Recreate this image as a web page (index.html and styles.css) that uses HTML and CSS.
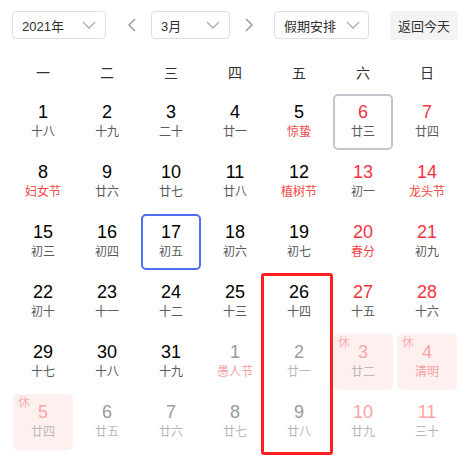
FILE: index.html
```html
<!DOCTYPE html>
<html lang="zh">
<head>
<meta charset="utf-8">
<link rel="stylesheet" href="styles.css">
</head>
<body>
<div class="page">
  <div class="toolbar">
    <div class="select sel-year"><span>2021年</span><svg class="chev" width="14" height="8" viewBox="0 0 14 8"><polyline points="1,1 7,7 13,1" fill="none" stroke="#a8abb2" stroke-width="1.3"/></svg></div>
    <svg class="arrow prev" width="8" height="14" viewBox="0 0 8 14"><polyline points="7,1 1,7 7,13" fill="none" stroke="#909399" stroke-width="1.4"/></svg>
    <div class="select sel-month"><span>3月</span><svg class="chev" width="14" height="8" viewBox="0 0 14 8"><polyline points="1,1 7,7 13,1" fill="none" stroke="#a8abb2" stroke-width="1.3"/></svg></div>
    <svg class="arrow next" width="8" height="14" viewBox="0 0 8 14"><polyline points="1,1 7,7 1,13" fill="none" stroke="#909399" stroke-width="1.4"/></svg>
    <div class="select sel-holiday"><span>假期安排</span><svg class="chev" width="14" height="8" viewBox="0 0 14 8"><polyline points="1,1 7,7 13,1" fill="none" stroke="#a8abb2" stroke-width="1.3"/></svg></div>
    <div class="today-btn">返回今天</div>
  </div>

  <div class="weekdays">
    <div>一</div><div>二</div><div>三</div><div>四</div><div>五</div><div>六</div><div>日</div>
  </div>

  <div class="days">
    <div class="cell"><div class="num">1</div><div class="lunar">十八</div></div>
    <div class="cell"><div class="num">2</div><div class="lunar">十九</div></div>
    <div class="cell"><div class="num">3</div><div class="lunar">二十</div></div>
    <div class="cell"><div class="num">4</div><div class="lunar">廿一</div></div>
    <div class="cell"><div class="num">5</div><div class="lunar fest">惊蛰</div></div>
    <div class="cell weekend selected"><div class="num">6</div><div class="lunar">廿三</div></div>
    <div class="cell weekend"><div class="num">7</div><div class="lunar">廿四</div></div>

    <div class="cell"><div class="num">8</div><div class="lunar fest">妇女节</div></div>
    <div class="cell"><div class="num">9</div><div class="lunar">廿六</div></div>
    <div class="cell"><div class="num">10</div><div class="lunar">廿七</div></div>
    <div class="cell"><div class="num">11</div><div class="lunar">廿八</div></div>
    <div class="cell"><div class="num">12</div><div class="lunar fest">植树节</div></div>
    <div class="cell weekend"><div class="num">13</div><div class="lunar">初一</div></div>
    <div class="cell weekend"><div class="num">14</div><div class="lunar fest">龙头节</div></div>

    <div class="cell"><div class="num">15</div><div class="lunar">初三</div></div>
    <div class="cell"><div class="num">16</div><div class="lunar">初四</div></div>
    <div class="cell today"><div class="num">17</div><div class="lunar">初五</div></div>
    <div class="cell"><div class="num">18</div><div class="lunar">初六</div></div>
    <div class="cell"><div class="num">19</div><div class="lunar">初七</div></div>
    <div class="cell weekend"><div class="num">20</div><div class="lunar fest">春分</div></div>
    <div class="cell weekend"><div class="num">21</div><div class="lunar">初九</div></div>

    <div class="cell"><div class="num">22</div><div class="lunar">初十</div></div>
    <div class="cell"><div class="num">23</div><div class="lunar">十一</div></div>
    <div class="cell"><div class="num">24</div><div class="lunar">十二</div></div>
    <div class="cell"><div class="num">25</div><div class="lunar">十三</div></div>
    <div class="cell"><div class="num">26</div><div class="lunar">十四</div></div>
    <div class="cell weekend"><div class="num">27</div><div class="lunar">十五</div></div>
    <div class="cell weekend"><div class="num">28</div><div class="lunar">十六</div></div>

    <div class="cell"><div class="num">29</div><div class="lunar">十七</div></div>
    <div class="cell"><div class="num">30</div><div class="lunar">十八</div></div>
    <div class="cell"><div class="num">31</div><div class="lunar">十九</div></div>
    <div class="cell other"><div class="num">1</div><div class="lunar fest">愚人节</div></div>
    <div class="cell other"><div class="num">2</div><div class="lunar">廿一</div></div>
    <div class="cell other rest"><span class="tag">休</span><div class="num">3</div><div class="lunar">廿二</div></div>
    <div class="cell other rest"><span class="tag">休</span><div class="num">4</div><div class="lunar fest">清明</div></div>

    <div class="cell other rest"><span class="tag">休</span><div class="num">5</div><div class="lunar">廿四</div></div>
    <div class="cell other"><div class="num">6</div><div class="lunar">廿五</div></div>
    <div class="cell other"><div class="num">7</div><div class="lunar">廿六</div></div>
    <div class="cell other"><div class="num">8</div><div class="lunar">廿七</div></div>
    <div class="cell other"><div class="num">9</div><div class="lunar">廿八</div></div>
    <div class="cell other weekend"><div class="num">10</div><div class="lunar">廿九</div></div>
    <div class="cell other weekend"><div class="num">11</div><div class="lunar">三十</div></div>
  </div>

  <div class="highlight"></div>
</div>
</body>
</html>
```

FILE: styles.css
```css
* { box-sizing: border-box; }
html, body { margin: 0; padding: 0; background: #fff; }
body {
  font-family: "Liberation Sans", "Noto Sans CJK SC", sans-serif;
  color: #303133;
}
.page { position: relative; width: 473px; height: 462px; }

.toolbar {
  display: flex;
  align-items: center;
  padding: 11px 0 0 12px;
  height: 39px;
}
.select {
  height: 28px;
  border: 1px solid #dcdfe6;
  border-radius: 4px;
  display: flex;
  align-items: center;
  justify-content: space-between;
  padding: 0 9px 0 9px;
  font-size: 13px;
  color: #303133;
}
.sel-year { width: 94px; }
.sel-month { width: 79px; }
.sel-holiday { width: 95px; padding-right: 8px; }
.chev { display: block; }
.arrow { display: block; }
.arrow.prev { margin: 0 15px 0 22px; }
.arrow.next { margin: 0 21px 0 15px; }
.today-btn {
  margin-left: 21px;
  height: 29px;
  width: 68px;
  background: #f4f4f5;
  border-radius: 4px;
  font-size: 13px;
  display: flex;
  align-items: center;
  justify-content: center;
  color: #303133;
}

.weekdays {
  display: grid;
  grid-template-columns: repeat(7, 60px);
  column-gap: 4px;
  margin: 20px 0 0 13px;
  height: 28px;
  line-height: 28px;
  font-size: 14px;
  text-align: center;
  color: #303133;
}

.days {
  display: grid;
  grid-template-columns: repeat(7, 60px);
  grid-auto-rows: 56px;
  gap: 4px;
  margin: 7px 0 0 13px;
}
.cell {
  position: relative;
  border: 2px solid transparent;
  border-radius: 5px;
  display: flex;
  flex-direction: column;
  align-items: center;
  padding-top: 6px;
}
.num {
  font-size: 18px;
  line-height: 20px;
  color: #000;
}
.lunar {
  margin-top: 2px;
  font-size: 12px;
  line-height: 16px;
  color: #595959;
}
.lunar.fest { color: #f54646; }
.weekend .num { color: #f5333f; }

.selected { border-color: #c3c5cc; }
.today { border-color: #4f6ef2; }

.other .num { color: #9a9a9a; }
.other .lunar { color: #b8b8b8; }
.other .lunar.fest { color: #f9a0a0; }
.other.weekend .num { color: #f9a3a3; }
.rest { background: #fff0f0; border-color: #fff0f0; }
.rest .num { color: #fba5a5; }
.tag {
  position: absolute;
  left: 3px;
  top: 0px;
  font-size: 12px;
  line-height: 14px;
  color: #f9b0b0;
}

.highlight {
  position: absolute;
  left: 261px;
  top: 273px;
  width: 72px;
  height: 182px;
  border: 3px solid #ff1f1f;
  border-radius: 3px;
}
```
